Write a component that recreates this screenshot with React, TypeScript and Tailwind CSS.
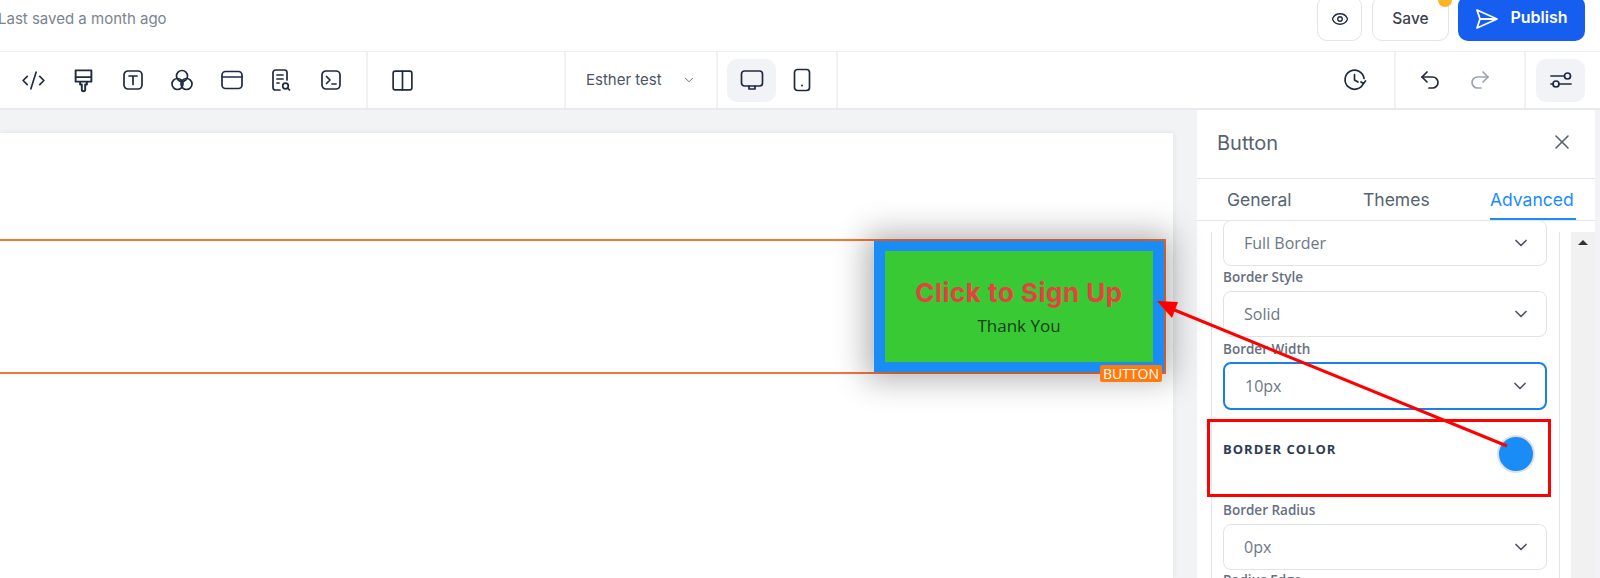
import { ChevronDown, CodeXml, Columns2, Eye, Redo2, Undo2, X } from 'lucide-react'
import type { ReactNode } from 'react'

const stroke = '#1f2a40'

function Glyph({ children, size = 24, color = stroke }: { children: ReactNode; size?: number; color?: string }) {
  return (
    <svg width={size} height={size} viewBox="0 0 24 24" fill="none" stroke={color} strokeWidth={1.7} strokeLinecap="round" strokeLinejoin="round">
      {children}
    </svg>
  )
}

function ToolIcon({ children }: { children: ReactNode }) {
  return <div className="flex h-[56px] w-[49.5px] items-center justify-center">{children}</div>
}

function SelectBox({ value, focused }: { value: string; focused?: boolean }) {
  return (
    <div
      className={
        focused
          ? 'flex h-[48px] items-center justify-between rounded-[8px] border-2 border-[#1a7fe8] pl-[20px] pr-[15px]'
          : 'flex h-[46px] items-center justify-between rounded-[8px] border border-[#dfe3e8] pl-[20px] pr-[15px]'
      }
    >
      <span className="text-[16px] text-[#6b7785]">{value}</span>
      <ChevronDown size={20} strokeWidth={2} className="text-[#4b5563]" />
    </div>
  )
}

function FieldLabel({ children, className }: { children: ReactNode; className: string }) {
  return <div className={`text-[13.5px] font-semibold leading-[18px] text-[#66707f] ${className}`}>{children}</div>
}

function Toolbar() {
  return (
    <div className="flex h-[59px] items-stretch border-b-2 border-[#e8e9ec] border-t border-t-[#eceef0] pr-[4px]">
      <div className="flex w-[368px] items-center border-r-2 border-[#f0f1f3] pl-[9px]">
        <ToolIcon>
          <CodeXml size={25} strokeWidth={1.6} color={stroke} />
        </ToolIcon>
        <ToolIcon>
          <Glyph size={27}>
            <path d="M5 3h14v10H5zM5 9h14M9 13h6v2.500h-1.500V20a1.500 1.500 0 0 1-3 0v-4.500H9z" />
          </Glyph>
        </ToolIcon>
        <ToolIcon>
          <Glyph>
            <rect x="3" y="3" width="18" height="18" rx="4" />
            <path d="M8 8h8M12 8v8.500" />
          </Glyph>
        </ToolIcon>
        <ToolIcon>
          <Glyph>
            <circle cx="12" cy="8" r="5.500" />
            <circle cx="7.500" cy="16" r="5.500" />
            <circle cx="16.500" cy="16" r="5.500" />
          </Glyph>
        </ToolIcon>
        <ToolIcon>
          <Glyph>
            <rect x="2" y="3.500" width="20" height="17" rx="3.500" />
            <path d="M2 9h20" />
          </Glyph>
        </ToolIcon>
        <ToolIcon>
          <Glyph>
            <path d="M11 22H6.500A2.500 2.500 0 0 1 4 19.500v-15A2.500 2.500 0 0 1 6.500 2h9A2.500 2.500 0 0 1 18 4.500V12M8 7h6M8 11h6M8 15h2" />
            <circle cx="16.500" cy="18" r="2.800" />
            <path d="M18.500 20l2 2" />
          </Glyph>
        </ToolIcon>
        <ToolIcon>
          <Glyph>
            <rect x="3" y="3" width="18" height="18" rx="4" />
            <path d="M7.500 8.500l3.500 3.500-3.500 3.500M13 16h4" />
          </Glyph>
        </ToolIcon>
      </div>
      <div className="flex w-[198px] items-center border-r-2 border-[#f0f1f3] pl-[22px]">
        <Columns2 size={25} strokeWidth={1.6} color={stroke} />
      </div>
      <div className="flex w-[152px] items-center border-r-2 border-[#f0f1f3] pl-[20px]">
        <span className="text-[15px] font-normal text-[#4b5563]">Esther test</span>
        <ChevronDown size={14} strokeWidth={1.5} className="ml-[20px] text-[#4b5563]" />
      </div>
      <div className="flex w-[120px] items-center border-r-2 border-[#f0f1f3] pl-[9px]">
        <div className="flex h-[43px] w-[49px] items-center justify-center rounded-[10px] bg-[#f2f3f7]">
          <Glyph>
            <rect x="1.500" y="3" width="21" height="15" rx="3" />
            <path d="M9 18v3h6v-3" />
          </Glyph>
        </div>
        <div className="flex w-[51px] items-center justify-center">
          <Glyph>
            <rect x="4.500" y="1.500" width="15" height="21" rx="3" />
            <path d="M12 17.500h.01" strokeWidth={2} />
          </Glyph>
        </div>
      </div>
      <div className="flex flex-1 items-center justify-end border-r-2 border-[#f0f1f3] pr-[27px]">
        <Glyph>
          <path d="M20.500 15A9.500 9.500 0 1 1 21 10.500" />
          <path d="M11.500 6.500V12l3.500 2" />
          <path d="M22.500 13l-2 2.500-2.500-1.500" />
        </Glyph>
      </div>
      <div className="flex w-[130px] items-center border-r-2 border-[#f0f1f3] pl-[22px]">
        <Undo2 size={24} strokeWidth={1.7} color={stroke} />
        <Redo2 size={24} strokeWidth={1.7} color="#9ca3af" className="ml-[26px]" />
      </div>
      <div className="flex w-[70px] items-center pl-[10px]">
        <div className="flex h-[43px] w-[49px] items-center justify-center rounded-[10px] bg-[#f2f3f7]">
          <Glyph>
            <path d="M2 8h13M2 16h2M10.500 16H22" />
            <circle cx="18.500" cy="8" r="3" />
            <circle cx="7" cy="16" r="3" />
          </Glyph>
        </div>
      </div>
    </div>
  )
}

function PropertiesPanel() {
  return (
    <div className="flex w-[398px] flex-col bg-white">
      <div className="flex h-[69px] items-start justify-between border-b border-[#e2e6ea] pl-[20px] pr-[21px]">
        <span className="pt-[20px] font-['Inter'] text-[20px] leading-[26px] text-[#55636f]">Button</span>
        <X size={24} strokeWidth={1.6} className="mt-[20px] text-[#55636f]" />
      </div>
      <div className="flex h-[42px] border-b border-[#e2e6ea] pl-[30px] font-['Inter'] text-[17.5px] leading-[42px] text-[#55636f]">
        <span className="w-[136px]">General</span>
        <span className="w-[127px]">Themes</span>
        <span className="h-[41px] w-[86px] border-b-2 border-[#1a8cff] text-[#1a8cff]">Advanced</span>
      </div>
      <div className="flex flex-1 overflow-hidden pl-[14px] pt-[11px] font-['Open_Sans']">
        <div className="w-[349px] border-x border-[#e2e6ea] pl-[11px] pr-[12px]">
          <div className="-mt-[12px] mb-[1px]">
            <SelectBox value="Full Border" />
          </div>
          <FieldLabel className="pt-[1px] pb-[5px]">Border Style</FieldLabel>
          <SelectBox value="Solid" />
          <FieldLabel className="pt-[3px] pb-[4px]">Border Width</FieldLabel>
          <SelectBox value="10px" focused />
          <div className="flex h-[91px] items-start justify-between pr-[12px]">
            <span className="pt-[30px] text-[13px] font-bold leading-[18px] tracking-[1px] text-[#2d3b55]">BORDER COLOR</span>
            <span className="mt-[25px] size-[38px] rounded-full border-2 border-[#dde1e6] bg-[#1a8cf5]" />
          </div>
          <FieldLabel className="pb-[5px]">Border Radius</FieldLabel>
          <SelectBox value="0px" />
          <FieldLabel className="pt-[1px]">Radius Edge</FieldLabel>
        </div>
        <div className="ml-[11px] flex flex-1 justify-center bg-[#f1f1f1] pt-[8px]">
          <span className="h-0 w-0 border-x-[5px] border-b-[5px] border-x-transparent border-b-[#333]" />
        </div>
      </div>
    </div>
  )
}

export default function App() {
  return (
    <div className="relative h-[578px] w-[1600px] overflow-hidden bg-white font-['Inter',sans-serif]">
      <div className="flex h-[51px] items-start justify-between pr-[15px]">
        <span className="-ml-[2px] pt-[9px] text-[15px] leading-[20px] text-[#7a8490]">Last saved a month ago</span>
        <div className="flex items-start">
          <div className="-mt-[4px] flex h-[45px] w-[45px] items-center justify-center rounded-[10px] border border-[#e1e4ea]">
            <Eye size={18} strokeWidth={1.8} color={stroke} />
          </div>
          <div className="relative -mt-[4px] ml-[10px] flex h-[45px] w-[77px] items-center justify-center rounded-[10px] border border-[#e1e4ea] text-[15.5px] font-medium text-[#39424e]">
            Save
            <span className="absolute -right-[4px] -top-[4px] size-[14px] rounded-full bg-[#fbb424]" />
          </div>
          <div className="-mt-[4px] ml-[9px] flex h-[45px] w-[127px] items-center justify-center gap-[11px] rounded-[10px] bg-[#155eef] text-[16px] font-semibold text-white">
            <svg width="24" height="24" viewBox="0 0 24 24" fill="none" stroke="white" strokeWidth={1.8} strokeLinejoin="round">
              <path d="M2 3l20 9-20 9 3-9zM5 12h17" />
            </svg>
            <span className="pb-[3px]">Publish</span>
          </div>
        </div>
      </div>
      <Toolbar />
      <div className="flex h-[468px] justify-between bg-[#f2f3f5] pr-[5px]">
        <div className="w-[1173px] pt-[23px]">
          <div className="h-full bg-white pt-[106px] shadow-[0_0_6px_rgba(0,0,0,0.08)]">
            <div className="mr-[7px] flex h-[135px] justify-end border-y-2 border-r-2 border-[#f9743a]">
              <div className="relative flex w-[290px] flex-col items-center justify-center border-x-[11px] border-y-[10px] border-[#1a8cf5] bg-[#38c934] shadow-[0_0_30px_8px_rgba(0,0,0,0.3)]">
                <span className="text-[26px] font-bold leading-[32px] tracking-[0.5px] text-[#e8403f]">Click to Sign Up</span>
                <span className="mt-[6px] font-['Open_Sans'] text-[17px] leading-[22px] text-[#153d17]">Thank You</span>
                <span className="absolute -bottom-[20px] -right-[9px] rounded-[2px] bg-[#ff7a0f] px-[3px] font-['Open_Sans'] text-[14px] leading-[17px] text-white">BUTTON</span>
              </div>
            </div>
          </div>
        </div>
        <PropertiesPanel />
      </div>
      <svg className="pointer-events-none absolute left-0 top-0" width="1600" height="578" fill="none">
        <rect x="1208.500" y="420.500" width="341" height="75" stroke="#ff0000" strokeWidth="3" />
        <path d="M1507 446L1172 309" stroke="#ff0000" strokeWidth="3" />
        <path d="M1157 301L1178 302L1172 318Z" fill="#ff0000" />
      </svg>
    </div>
  )
}
